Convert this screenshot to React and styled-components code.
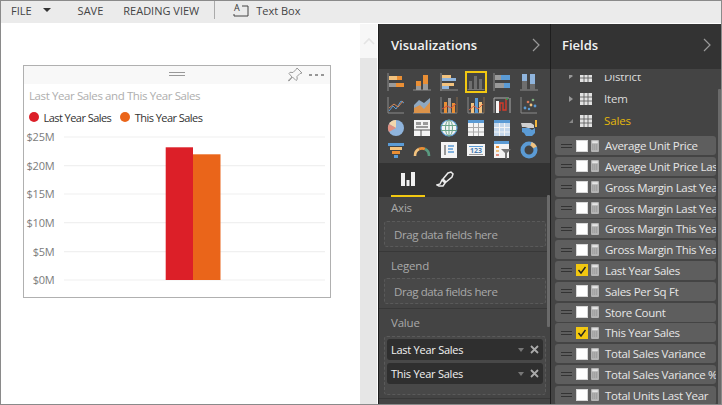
import React from "react";
import styled, { createGlobalStyle } from "styled-components";

const Global = createGlobalStyle`
  html, body { margin: 0; padding: 0; background: #fff; }
  * { box-sizing: border-box; }
`;
const FONT = `"Open Sans", "Noto Sans", sans-serif`;

const Frame = styled.div`
  width: 722px; height: 405px; overflow: hidden; display: flex; flex-direction: column;
  border: 1px solid #8a8a8a; font-family: ${FONT}; font-size: 11px; background: #fff;
`;
const Toolbar = styled.div`
  height: 22px; flex: none; background: #ebebeb; display: flex; align-items: center; color: #444; padding: 0 0 4px 10px;
`;
const ToolText = styled.span`
  margin-left: ${p => p.$ml || 0}px; white-space: nowrap;
`;
const Caret = styled.span`
  width: 0; height: 0; margin-left: 11px; border-left: 4px solid transparent; border-right: 4px solid transparent; border-top: 4px solid #333;
`;
const ToolSep = styled.span`
  width: 1px; height: 18px; background: #aaa; margin-left: 15px;
`;
const TextBoxIcon = styled.svg`
  margin-left: 18px; flex: none;
`;
const Main = styled.div`
  flex: 1; min-height: 0; display: flex; margin-top: 1px;
`;
const Canvas = styled.div`
  width: 359px; flex: none; background: #fff; padding: 41px 0 0 22px;
`;
const Card = styled.div`
  width: 308px; height: 233px; border: 1px solid #b0b0b0; background: #fff;
`;
const CardHead = styled.div`
  height: 18px; background: #f8f8f8; display: flex; align-items: center; justify-content: flex-end; position: relative; padding-right: 6px; gap: 6px;
`;
const Grip = styled.span`
  position: absolute; left: 145px; top: 6px; width: 16px; height: 4px; border-top: 1px solid #999; border-bottom: 1px solid #999;
`;
const CardTitle = styled.div`
  color: #aeaeae; font-size: 11.5px; margin: 4px 0 0 5px; line-height: 16px; letter-spacing: -0.4px; white-space: nowrap;
`;
const Legend = styled.div`
  display: flex; align-items: center; margin: 5px 0 0 5px; height: 16px; color: #333;
`;
const Dot = styled.span`
  width: 10px; height: 10px; border-radius: 50%; background: ${p => p.$c}; margin-right: 4.5px; margin-left: ${p => p.$ml || 0}px;
`;
const LegendText = styled.span`
  letter-spacing: -0.55px; white-space: nowrap;
`;
const ChartSvg = styled.svg`
  display: block; margin-top: 1px;
`;
const Scroll = styled.div`
  width: 17px; flex: none; background: #e6e6e6; display: flex; flex-direction: column;
`;
const ScrollUp = styled.div`
  height: 34px; background: #f7f7f7; display: flex; align-items: center; justify-content: center;
`;
const Gutter = styled.div`
  width: 1px; flex: none; background: #fff;
`;
const Pane = styled.div`
  flex: none; width: ${p => p.$w}px; background: #444; border-left: 1px solid #1e1e1e; display: flex; flex-direction: column; position: relative; overflow: hidden;
`;
const PaneHead = styled.div`
  height: 45px; flex: none; background: #333; color: #f2f2f2; font-size: 13px; font-weight: 600; display: flex; align-items: center; justify-content: space-between; padding: 0 9px 4px ${p => p.$pl}px;
  position: relative; z-index: 1;
`;
const Gallery = styled.div`
  height: 94px; flex: none; background: #444; display: grid; grid-template-columns: repeat(6, 26.67px); grid-auto-rows: 22.7px; padding: 2px 0 0 3.5px; align-items: center; justify-items: center;
`;
const IconCell = styled.div`
  width: 20px; height: 20px; display: flex; align-items: center; justify-content: center; border: 1px solid ${p => p.$on ? "#f2c811" : "transparent"};
  outline: ${p => p.$on ? "0.5px solid #f2c811" : "none"};
`;
const Tabs = styled.div`
  height: 34px; flex: none; background: #333; display: flex; padding-left: 12px; gap: 3px; align-items: center;
`;
const Tab = styled.div`
  width: 34px; height: 34px; display: flex; align-items: center; justify-content: center; border-bottom: 2px solid ${p => p.$on ? "#f2c811" : "transparent"};
`;
const Sections = styled.div`
  flex: 1; display: flex; flex-direction: column; background: #444;
`;
const Section = styled.div`
  height: ${p => p.$h}px; flex: none; padding: ${p => p.$pt}px 4px 0 5px; border-bottom: 1px solid #383838; color: #aaa;
`;
const SectionLabel = styled.div`
  height: 18px; line-height: 18px; padding-left: 7px; font-size: 11.5px; letter-spacing: -0.2px; color: #a9a9a9;
`;
const Well = styled.div`
  margin-top: ${p => p.$mt}px; height: ${p => p.$h || 26}px; border: 1px dashed #5a5a5a; border-radius: 3px; background: #484848; color: #a8a8a8; display: flex; flex-direction: column; gap: 3px;
  padding: ${p => p.$filled ? "2px 2px" : "0 9px"}; justify-content: ${p => p.$filled ? "flex-start" : "center"}; letter-spacing: -0.4px; font-size: 11.5px; width: 162px;
`;
const Chip = styled.div`
  height: 21px; border-radius: 3px; background: #2f2f2f; color: #f2f2f2; display: flex; align-items: center; padding: 0 4px; font-size: 11px; letter-spacing: -0.25px;
`;
const ChipText = styled.span`
  flex: 1; white-space: nowrap;
`;
const ChipCaret = styled.span`
  width: 0; height: 0; border-left: 3.5px solid transparent; border-right: 3.5px solid transparent; border-top: 4px solid #777; margin-right: 6px;
`;
const ChipX = styled.svg`
  display: block;
`;
const Thumb = styled.div`
  position: absolute; z-index: 2; right: ${p => p.$r}px; top: ${p => p.$t}px; width: 3px; height: ${p => p.$h}px; background: #6a6a6a; border-radius: 1px;
`;
const FieldBody = styled.div`
  flex: 1; min-height: 0; padding-top: 6px; display: flex; flex-direction: column;
`;
const FieldScroll = styled.div`
  flex: 1; min-height: 0; overflow: hidden; padding: 0 4px; display: flex; flex-direction: column;
`;
const Tree = styled.div`
  margin-top: -10px; flex: none;
`;
const TreeRow = styled.div`
  height: 22.4px; display: flex; align-items: center; padding-left: 14px; color: ${p => p.$gold ? "#e5b80b" : "#dcdcdc"}; font-size: 11.5px; letter-spacing: -0.15px;
`;
const TreeArrow = styled.span`
  width: 0; height: 0; margin-right: 7px; border-top: 3.5px solid transparent; border-bottom: 3.5px solid transparent; border-left: 4px solid ${p => p.$open ? "transparent" : "#999"};
  ${p => p.$open ? "border-right: 4px solid #888; border-left: 0; border-top: 4px solid transparent; border-bottom: 0;" : ""}
`;
const TreeLabel = styled.span`
  margin-left: 12px;
`;
const Rows = styled.div`
  margin-top: 4px; display: flex; flex-direction: column; gap: 1.8px; flex: none;
`;
const Row = styled.div`
  height: 19px; width: 161px; border-radius: 3px; background: #5e5e5e; display: flex; align-items: center; padding-left: 6px; overflow: hidden; color: #e6e6e6; font-size: 11.5px; letter-spacing: -0.3px; white-space: nowrap; flex: none;
`;
const Handle = styled.span`
  width: 11px; height: 4px; border-top: 1px solid #333; border-bottom: 1px solid #333; flex: none;
`;
const Box = styled.span`
  width: 12px; height: 12px; margin-left: 4px; flex: none; background: ${p => p.$on ? "#f2c811" : "#fff"}; border: 1px solid ${p => p.$on ? "#f2c811" : "#d8d8d8"}; display: flex; align-items: center; justify-content: center;
`;
const CalcIcon = styled.svg`
  margin: 0 6px 0 3px; flex: none; display: block;
`;

const R = ({ x, y, w, h, c }) => <rect x={x} y={y} width={w} height={h} fill={c} />;
const G = "#9a9a9a", O = "#ea8f35", B = "#5b9bd5", T = "#f2c27e", W = "#f4f4f4", D = "#6e6e6e", LB = "#8fb4dc";

const Ax = () => <path d="M1 1v16h16" stroke="#8a8a8a" fill="none" />;
const AxY = () => <path d="M1 0v18" stroke="#8a8a8a" fill="none" />;
const AxX = () => <path d="M0 17h18" stroke="#8a8a8a" fill="none" />;

const icons = [
  <><AxY /><R x={2} y={3} w={8} h={4} c={T} /><R x={10} y={3} w={5} h={4} c={O} /><R x={2} y={10} w={7} h={4} c={G} /><R x={9} y={10} w={8} h={4} c={O} /></>,
  <><AxX /><R x={3} y={8} w={5} h={5} c={O} /><R x={3} y={13} w={5} h={4} c={G} /><R x={10} y={2} w={5} h={9} c={O} /><R x={10} y={11} w={5} h={6} c={G} /></>,
  <><AxX /><AxY /><R x={2} y={2} w={9} h={3} c={T} /><R x={2} y={5} w={14} h={3} c={LB} /><R x={2} y={10} w={12} h={3} c={T} /><R x={2} y={13} w={7} h={3} c={LB} /></>,
  <><R x={2} y={8} w={3} h={8} c={D} /><R x={7} y={3} w={3} h={13} c={D} /><R x={12} y={6} w={3} h={10} c={D} /><path d="M0.5 16.5h17" stroke="#777" /></>,
  <><AxY /><R x={2} y={2} w={6} h={5} c={G} /><R x={8} y={2} w={9} h={5} c={B} /><R x={2} y={10} w={9} h={5} c={G} /><R x={11} y={10} w={6} h={5} c={B} /></>,
  <><AxX /><R x={2} y={1} w={5} h={7} c={LB} /><R x={2} y={8} w={5} h={9} c={D} /><R x={10} y={1} w={5} h={10} c={LB} /><R x={10} y={11} w={5} h={6} c={D} /></>,

  <><Ax /><path d="M2 15l4-5 3 3 5-8 3 2" stroke={B} fill="none" /><path d="M2 12l5-4 4 3 5-6" stroke="#d8895a" fill="none" /></>,
  <><AxX /><path d="M1 9l5-5 5 3 6-5v15H1z" fill="#8fa8c0" /><path d="M1 12l6-3 4 4 6-7v11H1z" fill={O} opacity=".85" /></>,
  <><Ax /><path d="M17 1v16" stroke="#8a6a4a" /><R x={4} y={6} w={3} h={11} c={O} /><R x={8} y={2} w={3} h={15} c={G} /><R x={12} y={7} w={3} h={10} c={O} /><path d="M2 13l5-3 4 2 5-4" stroke="#d05040" fill="none" /></>,
  <><Ax /><path d="M17 1v16" stroke="#8a6a4a" /><R x={4} y={7} w={3} h={10} c={T} /><R x={8} y={2} w={3} h={15} c={B} /><R x={12} y={6} w={3} h={11} c={T} /><path d="M2 14l5-4 4 3 5-5" stroke="#e0603a" fill="none" /></>,
  <><path d="M1 17V2h15M17 2v15" stroke="#aaa" fill="none" /><R x={3} y={5} w={3} h={12} c={W} /><path d="M7 15V7h3v7h3V3" stroke="#d43a2a" strokeWidth="1.4" fill="none" /><path d="M13 3h2" stroke="#3aa050" strokeWidth="1.4" /></>,
  <><Ax /><circle cx="5" cy="12" r="1.4" fill={B} /><circle cx="8" cy="6" r="1.3" fill="#d8795a" /><circle cx="11" cy="9" r="1.4" fill={T} /><circle cx="13" cy="4" r="1.3" fill="#7fb07f" /><circle cx="15" cy="10" r="1.4" fill={B} /><circle cx="9" cy="13" r="1.2" fill={B} /></>,

  <><circle cx="9" cy="9" r="8" fill={LB} /><path d="M9 9V1a8 8 0 0 0-7 4z" fill="#f3d7ac" /><path d="M9 9L2 5a8 8 0 0 0 0 8z" fill="#e08f80" /></>,
  <><R x={1} y={1} w={16} h={16} c={W} /><R x={3} y={3} w={5} h={3} c={G} /><R x={10} y={3} w={5} h={3} c={G} /><R x={3} y={7} w={12} h={2} c={G} /><path d="M1 11h16M8 11v6" stroke="#555" /></>,
  <><circle cx="9" cy="9" r="8" fill={W} stroke={B} strokeWidth="1.2" /><ellipse cx="9" cy="9" rx="3.5" ry="8" fill="none" stroke="#6aa58a" /><path d="M1 6.5h16M1 11.5h16M9 1v16" stroke="#6aa58a" /></>,
  <><R x={1} y={1} w={16} h={16} c={W} /><R x={1} y={1} w={16} h={3} c={B} /><path d="M6.5 4v13M11.5 4v13M1 8.5h16M1 13h16" stroke="#aaa" /></>,
  <><R x={1} y={1} w={16} h={16} c="#c5d8ec" /><R x={1} y={1} w={16} h={3} c={B} /><path d="M6.5 4v13M11.5 4v13M1 8.5h16M1 13h16" stroke="#f4f4f4" /></>,
  <><path d="M1 4h10l3 2v3H8L5 8H2z" fill="#cfcfcf" /><path d="M2 9h7l3 2 3-2v5l-3 3H6l-2-3-2-1z" fill={B} /><R x={15} y={1} w={2} h={7} c="#f2b53a" /></>,

  <><R x={1} y={2} w={16} h={3} c={B} /><R x={3} y={6} w={12} h={3} c={T} /><R x={5} y={10} w={8} h={3} c={O} /><R x={7} y={14} w={4} h={3} c={B} /></>,
  <><path d="M2 15a7.5 7.5 0 0 1 4-7" stroke={T} strokeWidth="2.6" fill="none" /><path d="M6 8a7.5 7.5 0 0 1 6 0" stroke={O} strokeWidth="2.6" fill="none" /><path d="M12 8a7.5 7.5 0 0 1 4 7" stroke="#5a9a80" strokeWidth="2.6" fill="none" /></>,
  <><R x={1} y={1} w={16} h={16} c={W} /><R x={4} y={4} w={2} h={10} c={G} /><path d="M8 5h6M8 8h5M8 11h6" stroke={B} strokeWidth="1.3" /></>,
  <><R x={0} y={3} w={18} h={12} c={W} /><path d="M2 5.5h14" stroke={B} /><text x="9" y="12" textAnchor="middle" fontSize="7" fontWeight="700" fontFamily="Open Sans" fill="#4a7cb0">123</text><path d="M2 13.5h14" stroke="#999" /></>,
  <><R x={1} y={0} w={15} h={17} c={W} /><R x={1} y={0} w={15} h={3} c={B} /><R x={3} y={5} w={3} h={2} c={O} /><R x={3} y={9} w={3} h={2} c={T} /><R x={3} y={13} w={3} h={2} c="#e08f80" /><path d="M8 8h10l-4 4v6l-2-1v-5z" fill="#777" /></>,
  <><circle cx="9" cy="9" r="6.5" fill="none" stroke={B} strokeWidth="4" /><path d="M11 2.8a6.5 6.5 0 0 1 4 3.6" stroke={T} strokeWidth="4" fill="none" /></>,
];

const Chevron = () => (
  <svg width="10" height="16" viewBox="0 0 10 16"><path d="M2 2l6 6-6 6" stroke="#9a9a9a" strokeWidth="1.2" fill="none" /></svg>
);
const TableIcon = () => (
  <svg width="12" height="12" viewBox="0 0 12 12"><rect width="12" height="12" fill="#e2e2e2" /><path d="M4 0v12M8 0v12M0 4h12M0 8h12" stroke="#555" strokeWidth=".8" /></svg>
);
const Check = () => (
  <svg width="10" height="10" viewBox="0 0 10 10"><path d="M1.5 5l2.5 3 4.5-6" stroke="#222" strokeWidth="1.4" fill="none" /></svg>
);
const X = () => (
  <ChipX width="9" height="9" viewBox="0 0 9 9"><path d="M1 1l7 7M8 1L1 8" stroke="#aaa" strokeWidth="1.8" /></ChipX>
);
const Calc = () => (
  <CalcIcon width="8" height="12" viewBox="0 0 8 12">
    <rect width="8" height="12" rx="1" fill="#b4b4b4" />
    <rect x="1.2" y="1.2" width="5.6" height="2" fill="#e6e6e6" />
    <path d="M1.2 5h5.6M1.2 7h5.6M1.2 9h5.6" stroke="#858585" strokeWidth=".8" strokeDasharray="1.2 .7" />
  </CalcIcon>
);

const ticks = [["$25M", 137], ["$20M", 165.7], ["$15M", 194], ["$10M", 222.7], ["$5M", 251.7], ["$0M", 280]];

const Chart = () => (
  <ChartSvg width="306" height="170" viewBox="24 126 306 170">
    {ticks.map(([l, y]) => (
      <g key={l}>
        <line x1="64" x2="325" y1={y} y2={y} stroke="#f0f0f0" strokeWidth="1.2" />
        <text x="54.5" y={y + 4} textAnchor="end" fontFamily={FONT} fontSize="11" letterSpacing="-0.2" fill="#7c7c7c">{l}</text>
      </g>
    ))}
    <rect x="165.7" y="147.3" width="27.3" height="132.7" fill="#dc1f28" />
    <rect x="193" y="154.3" width="27.5" height="125.7" fill="#ea651a" />
  </ChartSvg>
);

const fields = [
  ["Average Unit Price"], ["Average Unit Price Last Year"], ["Gross Margin Last Year"], ["Gross Margin Last Year %"],
  ["Gross Margin This Year"], ["Gross Margin This Year %"], ["Last Year Sales", 1], ["Sales Per Sq Ft"], ["Store Count"],
  ["This Year Sales", 1], ["Total Sales Variance"], ["Total Sales Variance %"], ["Total Units Last Year"],
];

export default function App() {
  return (
    <Frame>
      <Global />
      <Toolbar>
        <ToolText>FILE</ToolText><Caret />
        <ToolText $ml={27}>SAVE</ToolText>
        <ToolText $ml={20}>READING VIEW</ToolText>
        <ToolSep />
        <TextBoxIcon width="16" height="14" viewBox="0 0 16 14">
          <path d="M9 3h6v10H1v-2" stroke="#444" fill="none" />
          <text x="1" y="8" fontFamily={FONT} fontSize="9" fill="#333">A</text>
        </TextBoxIcon>
        <ToolText $ml={7}>Text Box</ToolText>
      </Toolbar>
      <Main>
        <Canvas>
          <Card>
            <CardHead>
              <Grip />
              <svg width="16" height="16" viewBox="0 0 16 16"><path d="M10 1l5 5-2 .5-3 3 .2 3-1.2 1L5.5 10 2 14l-.8-.5L5 10 2 6.5l1-1.2 3 .2 3-3z" stroke="#999" fill="none" /></svg>
              <svg width="15" height="4" viewBox="0 0 15 4"><path d="M0 2h3M6 2h3M12 2h3" stroke="#777" strokeWidth="1.4" /></svg>
            </CardHead>
            <CardTitle>Last Year Sales and This Year Sales</CardTitle>
            <Legend>
              <Dot $c="#dc1f28" /><LegendText>Last Year Sales</LegendText>
              <Dot $c="#ea651a" $ml={9} /><LegendText>This Year Sales</LegendText>
            </Legend>
            <Chart />
          </Card>
        </Canvas>
        <Scroll>
          <ScrollUp>
            <svg width="12" height="8" viewBox="0 0 12 8"><path d="M1 7l5-5 5 5" stroke="#e4e4e4" strokeWidth="1.6" fill="none" /></svg>
          </ScrollUp>
        </Scroll>
        <Gutter />
        <Pane $w={172}>
          <PaneHead $pl={12}>Visualizations<Chevron /></PaneHead>
          <Gallery>
            {icons.map((ic, i) => (
              <IconCell key={i} $on={i === 3}>
                <svg width="18" height="18" viewBox="0 0 18 18">{ic}</svg>
              </IconCell>
            ))}
          </Gallery>
          <Tabs>
            <Tab $on>
              <svg width="16" height="16" viewBox="0 0 16 16"><path d="M1 2h4v13H1zM6.5 9h3v6h-3zM11 1h4v14h-4z" fill="#f0f0f0" /></svg>
            </Tab>
            <Tab>
              <svg width="18" height="16" viewBox="0 0 18 16"><path d="M12 2l3-1 2 2-1 3-6 5-3-3zM6 9l3 3-2 3H3L1 14l3-1z" stroke="#ececec" strokeWidth="1.5" fill="none" /></svg>
            </Tab>
          </Tabs>
          <Sections>
            <Section $h={55} $pt={2}><SectionLabel>Axis</SectionLabel><Well $mt={4}>Drag data fields here</Well></Section>
            <Section $h={57} $pt={5}><SectionLabel>Legend</SectionLabel><Well $mt={3}>Drag data fields here</Well></Section>
            <Section $h={90} $pt={5}>
              <SectionLabel>Value</SectionLabel>
              <Well $filled $mt={4} $h={59}>
                <Chip><ChipText>Last Year Sales</ChipText><ChipCaret /><X /></Chip>
                <Chip><ChipText>This Year Sales</ChipText><ChipCaret /><X /></Chip>
              </Well>
            </Section>
          </Sections>
          <Thumb $r={0} $t={171} $h={132} />
        </Pane>
        <Pane $w={171}>
          <PaneHead $pl={11}>Fields<Chevron /></PaneHead>
          <FieldBody>
            <FieldScroll>
              <Tree>
                <TreeRow><TreeArrow /><TableIcon /><TreeLabel>District</TreeLabel></TreeRow>
                <TreeRow><TreeArrow /><TableIcon /><TreeLabel>Item</TreeLabel></TreeRow>
                <TreeRow $gold><TreeArrow $open /><TableIcon /><TreeLabel>Sales</TreeLabel></TreeRow>
              </Tree>
              <Rows>
                {fields.map(([name, on]) => (
                  <Row key={name}>
                    <Handle />
                    <Box $on={on}>{on ? <Check /> : null}</Box>
                    <Calc />
                    {name}
                  </Row>
                ))}
              </Rows>
            </FieldScroll>
          </FieldBody>
          <Thumb $r={0} $t={65} $h={320} />
        </Pane>
      </Main>
    </Frame>
  );
}
